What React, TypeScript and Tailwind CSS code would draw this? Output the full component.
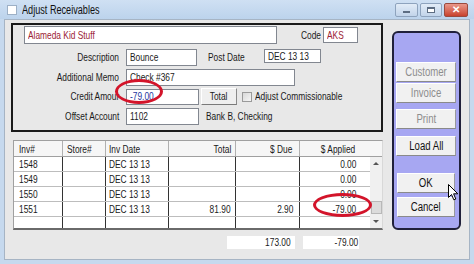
import React from "react"

const font = { fontFamily: '"Liberation Sans", Arial, sans-serif' }

const rows = [
  { inv: "1548", date: "DEC 13 13", total: "", due: "", applied: "0.00" },
  { inv: "1549", date: "DEC 13 13", total: "", due: "", applied: "0.00" },
  { inv: "1550", date: "DEC 13 13", total: "", due: "", applied: "0.00" },
  { inv: "1551", date: "DEC 13 13", total: "81.90", due: "2.90", applied: "-79.00" },
  { inv: "", date: "", total: "", due: "", applied: "" },
]

// the screenshot is squeezed sideways, so text is narrowed to match
const origins = { l: "origin-left", r: "origin-right", c: "origin-center" }

function T({ children, o = "l" }: { children?: React.ReactNode; o?: "l" | "r" | "c" }) {
  return <span className={`inline-block whitespace-nowrap scale-x-[0.76] ${origins[o]}`}>{children}</span>
}

function Field({ className = "", children }: { className?: string; children?: React.ReactNode }) {
  return (
    <div className={`flex items-center overflow-hidden border border-[#828790] bg-white px-[3px] ${className}`}>
      <T>{children}</T>
    </div>
  )
}

function SideButton({ label, disabled, className = "" }: { label: string; disabled?: boolean; className?: string }) {
  return (
    <div
      className={`flex h-[20px] items-center justify-center border border-t-white border-l-white border-r-[#9a9a9a] border-b-[#8a8a8a] bg-[#f1f1f1] text-[12px] ${
        disabled ? "text-[#8d8d8d]" : "text-[#111]"
      } ${className}`}
    >
      <span className="inline-block scale-x-[0.8] whitespace-nowrap">{label}</span>
    </div>
  )
}

function TitleBar() {
  return (
    <div className="flex h-[19px] items-center bg-gradient-to-b from-[#cfe0f3] to-[#bcd3ec] pl-[7px] pr-[6px]">
      <div className="h-[10px] w-[10px] border border-[#9db0c6] bg-white" />
      <span className="ml-[5px] text-[12px] text-[#111]">
        <T>Adjust Receivables</T>
      </span>
      <div className="ml-auto flex items-start gap-[2px] self-start pt-[3px]">
        <div className="flex h-[14px] w-[23px] items-center justify-center rounded-[2px] border border-[#8ea3bd] bg-gradient-to-b from-[#e2ecf7] to-[#c2d4ea]">
          <div className="mt-[3px] h-[2px] w-[7px] border border-[#5d6d82] bg-white" />
        </div>
        <div className="flex h-[14px] w-[22px] items-center justify-center rounded-[2px] border border-[#8ea3bd] bg-gradient-to-b from-[#e2ecf7] to-[#c2d4ea]">
          <div className="h-[6px] w-[8px] border border-[#5d6d82] border-t-2 bg-white" />
        </div>
        <div className="flex h-[14px] w-[24px] items-center justify-center rounded-[2px] border border-[#9a4a3e] bg-gradient-to-b from-[#e9978a] to-[#c8412d] text-[10px] font-bold leading-none text-white">
          ✕
        </div>
      </div>
    </div>
  )
}

function Label({ children }: { children: React.ReactNode }) {
  return (
    <span className="w-[95px] text-right">
      <T o="r">{children}</T>
    </span>
  )
}

function TopPanel() {
  return (
    <div className="relative h-[109px] w-[372px] border-2 border-[#1a1a1a] pl-[11px] pt-[1px]">
      <div className="flex h-[18px] items-center">
        <Field className="h-[18px] w-[253px] text-[#9b2335]">Alameda Kid Stuff</Field>
        <span className="ml-[24px]">
          <T>Code</T>
        </span>
        <Field className="-ml-[4px] h-[16px] w-[35px] text-[#9b2335]">AKS</Field>
      </div>
      <div className="mt-[5px] flex h-[17px] items-center">
        <Label>Description</Label>
        <Field className="ml-[7px] h-[17px] w-[71px]">Bounce</Field>
        <span className="ml-[11px] w-[56px]">
          <T>Post Date</T>
        </span>
        <Field className="-mt-[3px] h-[14px] w-[57px]">DEC 13 13</Field>
      </div>
      <div className="mt-[3px] flex h-[17px] items-center">
        <Label>Additional Memo</Label>
        <Field className="ml-[7px] h-[17px] w-[169px]">Check #367</Field>
      </div>
      <div className="mt-[2px] flex h-[17px] items-center">
        <Label>Credit Amour</Label>
        <Field className="ml-[7px] h-[16px] w-[73px] text-[#1d35a0]">-79.00</Field>
        <div className="ml-[2px] flex h-[17px] w-[36px] items-center justify-center border border-t-white border-l-white border-r-[#8a8a8a] border-b-[#7a7a7a] bg-[#efefef]">
          <T o="c">Total</T>
        </div>
        <div className="ml-[5px] h-[10px] w-[10px] border border-[#9a9a9a] bg-gradient-to-br from-[#d8d8d8] to-[#f6f6f6]" />
        <span className="ml-[3px]">
          <T>Adjust Commissionable</T>
        </span>
      </div>
      <div className="mt-[3px] flex h-[17px] items-center">
        <Label>Offset Account</Label>
        <Field className="ml-[7px] h-[17px] w-[73px]">1102</Field>
        <span className="ml-[7px]">
          <T>Bank B, Checking</T>
        </span>
      </div>
    </div>
  )
}

const cols = ["w-[49px]", "w-[43px]", "w-[63px]", "w-[67px]", "w-[64px]", "w-[70px]"]

function Grid() {
  return (
    <div className="ml-[2px] mt-[8px] w-[370px] border-l border-t border-[#a0a0a0] border-b-2 border-b-[#6a6a6a] border-r border-r-[#d8d8d8] bg-white">
      <div className="flex h-[16px] items-center border-b border-[#a0a0a0] bg-[#f6f6f6] leading-[16px]">
        <div className={`${cols[0]} h-full border-r border-[#b0b0b0] pl-[5px]`}>
          <T>Inv#</T>
        </div>
        <div className={`${cols[1]} h-full border-r border-[#b0b0b0] pl-[4px]`}>
          <T>Store#</T>
        </div>
        <div className={`${cols[2]} h-full border-r border-[#b0b0b0] pl-[3px]`}>
          <T>Inv Date</T>
        </div>
        <div className={`${cols[3]} h-full border-r border-[#b0b0b0] pr-[4px] text-right`}>
          <T o="r">Total</T>
        </div>
        <div className={`${cols[4]} h-full border-r border-[#b0b0b0] pr-[7px] text-right`}>
          <T o="r">$ Due</T>
        </div>
        <div className="h-full flex-1 pr-[27px] text-right">
          <T o="r">$ Applied</T>
        </div>
      </div>
      <div className="flex">
        <div className="flex flex-col">
          {rows.map((r, i) => (
            <div
              key={i}
              className={`flex leading-[14px] ${i < rows.length - 1 ? "h-[15px] border-b border-[#bdbdbd]" : "h-[11px]"}`}
            >
              <div className={`${cols[0]} border-r border-[#333] pl-[5px]`}>
                <T>{r.inv}</T>
              </div>
              <div className={`${cols[1]} border-r border-[#333]`} />
              <div className={`${cols[2]} border-r border-[#333] pl-[3px]`}>
                <T>{r.date}</T>
              </div>
              <div className={`${cols[3]} border-r border-[#333] pr-[4px] text-right`}>
                <T o="r">{r.total}</T>
              </div>
              <div className={`${cols[4]} border-r border-[#333] pr-[6px] text-right`}>
                <T o="r">{r.due}</T>
              </div>
              <div className={`${cols[5]} pr-[14px] text-right`}>
                <T o="r">{r.applied}</T>
              </div>
            </div>
          ))}
        </div>
        <div className="flex w-[13px] flex-col items-center bg-[#f0f0f0]">
          <div className="mt-[5px] h-0 w-0 border-x-[3px] border-b-[3px] border-x-transparent border-b-[#555]" />
          <div className="mt-[36px] h-[13px] w-[11px] border border-[#b8b8b8] bg-[#dcdcdc]" />
          <div className="mt-[6px] h-0 w-0 border-x-[3px] border-t-[3px] border-x-transparent border-t-[#555]" />
        </div>
      </div>
    </div>
  )
}

function Totals() {
  return (
    <div className="mt-[6px] flex h-[13px] leading-[13px]">
      <div className="ml-[216px] w-[68px] bg-white pr-[4px] text-right">
        <T o="r">173.00</T>
      </div>
      <div className="ml-[8px] w-[56px] bg-white pr-[1px] text-right">
        <T o="r">-79.00</T>
      </div>
    </div>
  )
}

function Cursor() {
  return (
    <svg className="absolute left-[448px] top-[184px]" width="11" height="17" viewBox="0 0 11 17">
      <path
        d="M0.5 0.5 L0.5 13.5 L3.5 10.5 L5.8 15.8 L7.8 15 L5.6 9.8 L9.8 9.8 Z"
        fill="white"
        stroke="black"
        strokeWidth="1"
        strokeLinejoin="round"
      />
    </svg>
  )
}

export default function App() {
  return (
    <div
      className="relative flex h-[264px] w-[474px] flex-col overflow-hidden bg-[#c6d9ee] text-[11px] text-[#1a1a1a]"
      style={font}
    >
      <TitleBar />
      <div className="mx-[4px] mb-[4px] flex flex-1 border border-[#a6b4c4] bg-[#e8e8e8]">
        <div className="ml-[6px] mt-[3px] flex flex-col">
          <TopPanel />
          <Grid />
          <Totals />
        </div>
        <div className="ml-[9px] mt-[11px] flex h-[199px] w-[69px] flex-col rounded-[6px] border-2 border-[#20203a] bg-[#a7a7f2] pl-[2px] pr-[3px]">
          <SideButton label="Customer" disabled className="mt-[29px]" />
          <SideButton label="Invoice" disabled className="mt-[1px]" />
          <SideButton label="Print" disabled className="mt-[6px]" />
          <SideButton label="Load All" className="mt-[7px]" />
          <SideButton label="OK" className="mx-[1px] mt-[17px]" />
          <SideButton label="Cancel" className="mx-[1px] mt-[4px]" />
        </div>
      </div>
      <div className="pointer-events-none absolute left-[115px] top-[79px] h-[25px] w-[48px] rounded-[50%] border-[3px] border-[#d3142a]" />
      <div className="pointer-events-none absolute left-[313px] top-[193px] h-[24px] w-[59px] rounded-[50%] border-[3px] border-[#d3142a]" />
      <Cursor />
    </div>
  )
}
